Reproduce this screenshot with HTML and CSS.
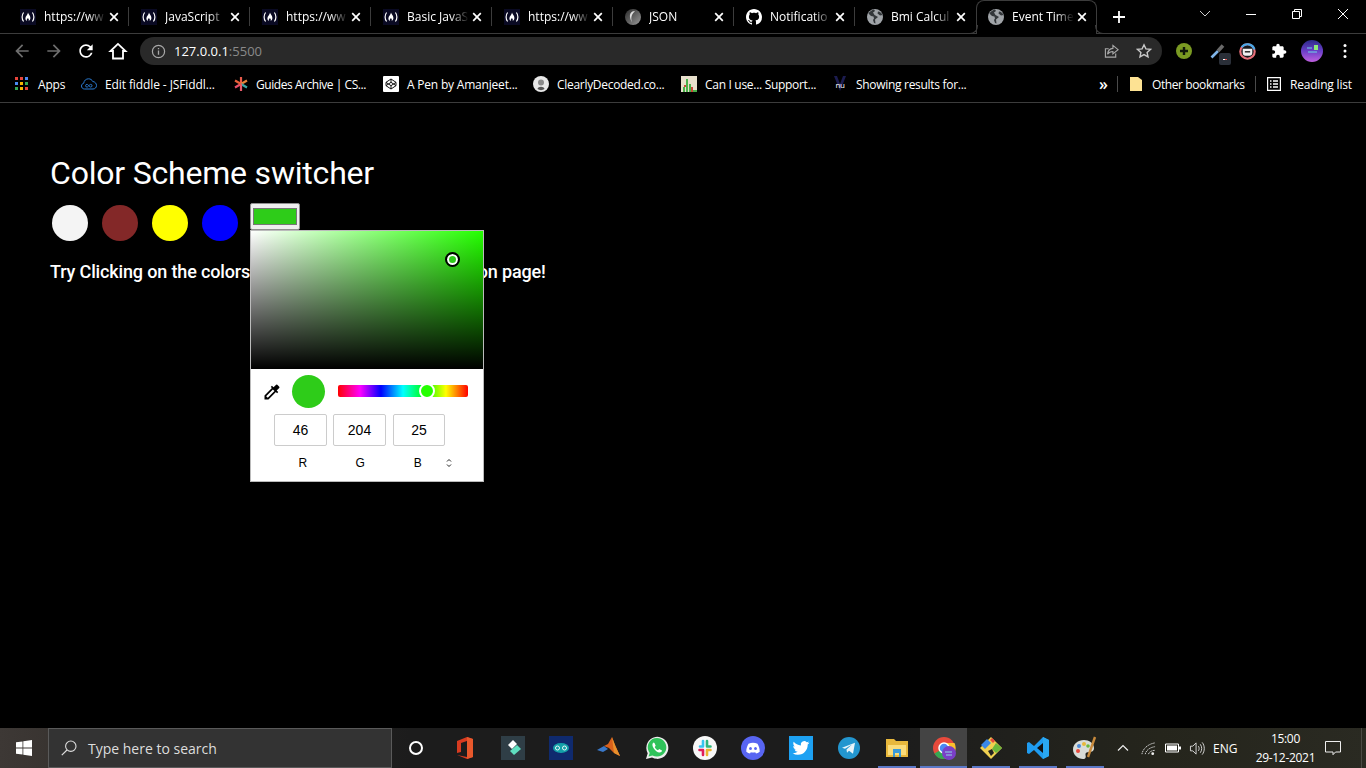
FILE: index.html
```html
<!DOCTYPE html>
<html lang="en">
    <head>
        <meta charset="UTF-8">
        <meta name="viewport" content="width=device-width, initial-scale=1.0">
        <title>Event Timer</title>
        <link rel="stylesheet" href="styles.css">
    </head>
    <body>
        <svg class="defs" width="0" height="0">
            <symbol id="fcc" viewBox="0 0 16 16">
                <rect width="16" height="16" fill="#0a0a23"/>
                <path d="M3.600 3.500C1.600 6 1.600 10 3.600 12.500M12.400 3.500c2 2.500 2 6.500 0 9" fill="none" stroke="#fff" stroke-width="1.200"/>
                <path d="M8 3.600c.4 1.600 2.400 3 2.400 5.400 0 1.600-.9 2.600-1.800 3 .5-1.200.2-2.200-.7-3-.7 1-1.500 1.600-.9 3-1.100-.5-1.600-1.500-1.600-2.800C5.400 7 7.900 6 8 3.600z" fill="#fff"/>
            </symbol>
            <symbol id="globe" viewBox="0 0 16 16">
                <circle cx="8" cy="8" r="8" fill="#a0a4a8"/>
                <path d="M7 .5C5 1 2.500 2.500 1.500 4.500L4 7l2.500.5.5 2-1 1.500 1 3 1.500.5-.5-4 3-2.500-3.500-2L6 3.500l2-1.500zM11 2.500l-.5 2 2.500 2 2.500-.5c-.5-1.500-2.500-3.500-4.500-3.500z" fill="#33373a"/>
            </symbol>
            <symbol id="close" viewBox="0 0 10 10">
                <path d="M1.200 1.200l7.600 7.600M8.800 1.200L1.200 8.800" fill="none" stroke="#fff" stroke-width="1.700"/>
            </symbol>
        </svg>

        <header class="tabstrip">
            <div class="tab">
                <svg class="favicon"><use href="#fcc"/></svg>
                <span class="tab-title">https://ww</span>
                <svg class="tab-close"><use href="#close"/></svg>
            </div>
            <div class="tab">
                <svg class="favicon"><use href="#fcc"/></svg>
                <span class="tab-title">JavaScript</span>
                <svg class="tab-close"><use href="#close"/></svg>
            </div>
            <div class="tab">
                <svg class="favicon"><use href="#fcc"/></svg>
                <span class="tab-title">https://ww</span>
                <svg class="tab-close"><use href="#close"/></svg>
            </div>
            <div class="tab">
                <svg class="favicon"><use href="#fcc"/></svg>
                <span class="tab-title">Basic JavaS</span>
                <svg class="tab-close"><use href="#close"/></svg>
            </div>
            <div class="tab">
                <svg class="favicon"><use href="#fcc"/></svg>
                <span class="tab-title">https://ww</span>
                <svg class="tab-close"><use href="#close"/></svg>
            </div>
            <div class="tab">
                <svg class="favicon" viewBox="0 0 16 16">
                    <defs>
                        <linearGradient id="json-fill" x1="0" y1="0" x2="1" y2="1">
                            <stop offset="0" stop-color="#2a2a2a"/>
                            <stop offset="1" stop-color="#9a9a9a"/>
                        </linearGradient>
                    </defs>
                    <circle cx="8" cy="8" r="8" fill="url(#json-fill)"/>
                    <path d="M10 2.500c-3-1-5.500 2-5 5.500.3 2.500 1.500 4.500 2 5.500-1-3-1-6 .5-8.500.7-1.200 1.600-2 2.500-2.500z" fill="#ddd"/>
                </svg>
                <span class="tab-title">JSON</span>
                <svg class="tab-close"><use href="#close"/></svg>
            </div>
            <div class="tab">
                <svg class="favicon" viewBox="0 0 16 16">
                    <path fill="#fff" d="M8 0C3.58 0 0 3.58 0 8c0 3.54 2.29 6.53 5.47 7.59.4.07.55-.17.55-.38 0-.19-.01-.82-.01-1.49-2.01.37-2.53-.49-2.69-.94-.09-.23-.48-.94-.82-1.13-.28-.15-.68-.52-.01-.53.63-.01 1.08.58 1.23.82.72 1.21 1.87.87 2.33.66.07-.52.28-.87.51-1.07-1.78-.2-3.64-.89-3.64-3.95 0-.87.31-1.59.82-2.15-.08-.2-.36-1.02.08-2.12 0 0 .67-.21 2.2.82.64-.18 1.32-.27 2-.27.68 0 1.36.09 2 .27 1.53-1.04 2.2-.82 2.2-.82.44 1.1.16 1.92.08 2.12.51.56.82 1.27.82 2.15 0 3.07-1.87 3.75-3.65 3.95.29.25.54.73.54 1.48 0 1.07-.01 1.93-.01 2.2 0 .21.15.46.55.38A8.013 8.013 0 0016 8c0-4.42-3.58-8-8-8z"/>
                </svg>
                <span class="tab-title">Notificatio</span>
                <svg class="tab-close"><use href="#close"/></svg>
            </div>
            <div class="tab tab-before-active">
                <svg class="favicon"><use href="#globe"/></svg>
                <span class="tab-title">Bmi Calcul</span>
                <svg class="tab-close"><use href="#close"/></svg>
            </div>
            <div class="tab tab-active">
                <svg class="favicon"><use href="#globe"/></svg>
                <span class="tab-title">Event Time</span>
                <svg class="tab-close"><use href="#close"/></svg>
            </div>
            <svg class="new-tab" viewBox="0 0 12 12"><path d="M6 0v12M0 6h12" stroke="#fff" stroke-width="1.800"/></svg>
            <div class="window-controls">
                <svg class="win-btn" viewBox="0 0 46 16"><path d="M18 5l5 5 5-5" fill="none" stroke="#ccc"/></svg>
                <svg class="win-btn" viewBox="0 0 46 16"><path d="M18 8.500h10" stroke="#fff"/></svg>
                <svg class="win-btn" viewBox="0 0 46 16"><path d="M18.500 5.500h7v7h-7zM20.500 5.500v-2h7v7h-2" fill="none" stroke="#fff"/></svg>
                <svg class="win-btn" viewBox="0 0 46 16"><path d="M18 3l10 10M28 3L18 13" stroke="#fff"/></svg>
            </div>
        </header>

        <nav class="toolbar">
            <svg class="nav-icon" viewBox="0 0 24 24"><path fill="#6e6e6e" d="M20 11H7.830l5.590-5.590L12 4l-8 8 8 8 1.410-1.410L7.830 13H20v-2z"/></svg>
            <svg class="nav-icon" viewBox="0 0 24 24"><path fill="#6e6e6e" d="M4 11h12.170l-5.590-5.590L12 4l8 8-8 8-1.410-1.410L16.170 13H4v-2z"/></svg>
            <svg class="nav-icon" viewBox="0 0 24 24"><path fill="#fff" d="M17.650 6.350A7.958 7.958 0 0012 4c-4.420 0-7.990 3.580-7.990 8s3.570 8 7.990 8c3.730 0 6.840-2.550 7.730-6h-2.080A5.990 5.990 0 0112 18c-3.310 0-6-2.690-6-6s2.690-6 6-6c1.660 0 3.140.690 4.220 1.780L13 11h7V4l-2.350 2.350z"/></svg>
            <svg class="nav-icon" viewBox="0 0 24 24"><path fill="none" stroke="#fff" stroke-width="2.200" d="M12 3.500L3 12h3v9h12v-9h3z"/></svg>
            <div class="omnibox">
                <svg class="omni-info" viewBox="0 0 16 16">
                    <circle cx="8" cy="8" r="6.500" fill="none" stroke="#a8a8a8" stroke-width="1.300"/>
                    <path d="M8 7v4.500M8 4.300v1.400" stroke="#a8a8a8" stroke-width="1.400"/>
                </svg>
                <span class="omni-url">127.0.0.1<span class="omni-port">:5500</span></span>
                <svg class="omni-share" viewBox="0 0 16 16"><path d="M9.500 1.500L15 6l-5.500 4.500V8C6.500 8 5 9 3.800 11c.3-3.500 2.200-6 5.700-6.300zM12.500 10v4h-11V5h3.500" fill="none" stroke="#a8a8a8" stroke-width="1.200"/></svg>
                <svg class="omni-star" viewBox="0 0 16 16"><path d="M8 1.800l1.900 4.100 4.500.5-3.300 3 .9 4.400L8 11.600l-4 2.200.9-4.400-3.300-3 4.500-.5z" fill="none" stroke="#c8c8c8" stroke-width="1.400"/></svg>
            </div>
            <div class="extensions">
                <svg class="ext-icon" viewBox="0 0 16 16">
                    <circle cx="8" cy="8" r="8" fill="#7a9a22"/>
                    <path d="M8 4v8M4 8h8" stroke="#10180a" stroke-width="2.400"/>
                </svg>
                <span class="ext-dropper">
                    <svg class="ext-icon" viewBox="0 0 16 16">
                        <path d="M1.500 14.500l6.500-6.500" stroke="#7fb4e8" stroke-width="2.600"/>
                        <path d="M8 8l5-5.500" stroke="#6a6a6a" stroke-width="3.600"/>
                    </svg>
                    <span class="ext-badge"><span class="ext-badge-dash"></span></span>
                </span>
                <svg class="ext-icon ext-ring" viewBox="0 0 16 16">
                    <circle cx="8" cy="8" r="6.800" fill="#16181c" stroke="#e8707a" stroke-width="2"/>
                    <path d="M2.500 4A6.800 6.800 0 0 1 14.500 6" fill="none" stroke="#4aa8e8" stroke-width="2"/>
                    <path d="M3.500 5.500h9v4c0 1.500-1 2.500-2.500 2.500H6c-1.500 0-2.500-1-2.500-2.500z" fill="#f0f0f0"/>
                    <path d="M5.500 7.500h5v1.500h-5z" fill="#333"/>
                </svg>
                <svg class="ext-icon ext-puzzle" viewBox="0 0 24 24"><path fill="#fff" d="M20.500 11H19V7c0-1.100-.9-2-2-2h-4V3.500C13 2.120 11.880 1 10.500 1S8 2.120 8 3.500V5H4c-1.100 0-1.990.9-1.990 2v3.800H3.500c1.490 0 2.700 1.210 2.700 2.700s-1.210 2.700-2.700 2.700H2V20c0 1.100.9 2 2 2h3.800v-1.500c0-1.490 1.210-2.700 2.700-2.700 1.490 0 2.700 1.210 2.700 2.700V22H17c1.100 0 2-.9 2-2v-4h1.500c1.380 0 2.500-1.120 2.500-2.500S21.880 11 20.500 11z"/></svg>
                <svg class="ext-avatar" viewBox="0 0 22 22">
                    <defs>
                        <linearGradient id="avatar-fill" x1="0" y1="0" x2="0" y2="1">
                            <stop offset="0" stop-color="#2c2a8a"/>
                            <stop offset="0.5" stop-color="#6a3fc8"/>
                            <stop offset="1" stop-color="#c060e0"/>
                        </linearGradient>
                    </defs>
                    <circle cx="11" cy="11" r="11" fill="url(#avatar-fill)"/>
                    <path d="M13 5h4v5h-4z" fill="#8fe87a"/>
                    <path d="M6 8h5M7 12h9" stroke="#6fd8e8" stroke-width="1.200"/>
                </svg>
                <svg class="ext-kebab" viewBox="0 0 4 16">
                    <circle cx="2" cy="2.500" r="1.500" fill="#fff"/>
                    <circle cx="2" cy="8" r="1.500" fill="#fff"/>
                    <circle cx="2" cy="13.500" r="1.500" fill="#fff"/>
                </svg>
            </div>
        </nav>

        <nav class="bookmarks">
            <a class="bookmark bm-apps">
                <svg class="bm-icon" viewBox="0 0 14 14">
                    <path d="M0 0h3v3H0z" fill="#e8453c"/><path d="M5 0h3v3H5z" fill="#e8453c"/><path d="M10 0h3v3h-3z" fill="#4a8af4"/>
                    <path d="M0 5h3v3H0z" fill="#4a8af4"/><path d="M5 5h3v3H5z" fill="#f4b400"/><path d="M10 5h3v3h-3z" fill="#34a853"/>
                    <path d="M0 10h3v3H0z" fill="#34a853"/><path d="M5 10h3v3H5z" fill="#f4b400"/><path d="M10 10h3v3h-3z" fill="#e8453c"/>
                </svg>
                Apps
            </a>
            <a class="bookmark bm-fiddle">
                <svg class="bm-icon" viewBox="0 0 16 16">
                    <path d="M3.500 13C1.500 13 .5 11.500.5 10c0-1.500 1-2.500 2.200-2.700C3 4.500 5 2.800 7.500 2.800c2 0 3.500 1 4.200 2.700 2.200.1 3.800 2 3.800 4 0 2-1.500 3.500-3.500 3.500z" fill="none" stroke="#2a7ad0" stroke-width="1"/>
                    <path d="M7.800 9.700c-.7-1-1.200-1.300-1.900-1.300a1.300 1.300 0 0 0 0 2.600c.7 0 1.200-.3 1.900-1.300s1.200-1.300 1.900-1.300a1.300 1.300 0 0 1 0 2.600c-.7 0-1.200-.3-1.900-1.300z" fill="none" stroke="#2a7ad0" stroke-width="1"/>
                </svg>
                Edit fiddle - JSFiddl...
            </a>
            <a class="bookmark bm-guides">
                <svg class="bm-icon" viewBox="0 0 16 16">
                    <path d="M8 8V1" stroke="#e85a4a" stroke-width="2.200"/>
                    <path d="M8 8l6-3.500" stroke="#e8843a" stroke-width="2.200"/>
                    <path d="M8 8l6 3.500" stroke="#3aa8a8" stroke-width="2.200"/>
                    <path d="M8 8v7" stroke="#e85a6a" stroke-width="2.200"/>
                    <path d="M8 8l-6 3.500" stroke="#e8506a" stroke-width="2.200"/>
                    <path d="M8 8L2 4.500" stroke="#e8603a" stroke-width="2.200"/>
                </svg>
                Guides Archive | CS...
            </a>
            <a class="bookmark bm-pen">
                <svg class="bm-icon" viewBox="0 0 16 16">
                    <rect width="16" height="16" rx="1" fill="#fff"/>
                    <path d="M8 3l5 3.300v3.400L8 13l-5-3.300V6.300zM8 3v3.300M8 9.700V13M3 6.300l5 3.400 5-3.400M3 9.700l5-3.400 5 3.400" fill="none" stroke="#111" stroke-width="1"/>
                </svg>
                A Pen by Amanjeet...
            </a>
            <a class="bookmark bm-clearly">
                <svg class="bm-icon" viewBox="0 0 16 16">
                    <circle cx="8" cy="8" r="8" fill="#e8e8e8"/>
                    <circle cx="8" cy="6.500" r="3" fill="#8a8a8a"/>
                    <path d="M4.500 13c.5-3 6.500-3 7 0-2 1.500-5 1.500-7 0z" fill="#555"/>
                </svg>
                ClearlyDecoded.co...
            </a>
            <a class="bookmark bm-caniuse">
                <svg class="bm-icon" viewBox="0 0 16 16">
                    <rect width="16" height="16" fill="#e8e0cc"/>
                    <path d="M2 11h2v5H2zM5 3h2v13H5zM8 8h2v8H8z" fill="#4ab04a"/>
                    <path d="M3 9h2v2H3zM10 11h2v5h-2z" fill="#c84a3a"/>
                    <path d="M12 14h4v2h-4z" fill="#4ab04a"/>
                </svg>
                Can I use... Support...
            </a>
            <a class="bookmark bm-nu">
                <svg class="bm-icon" viewBox="0 0 16 16">
                    <path d="M2 0l6 15 6-15h-3L8 8 5 0z" fill="#1c1c50"/>
                    <text class="bm-nu-text" x="8" y="12" text-anchor="middle">nu</text>
                </svg>
                Showing results for...
            </a>
            <span class="bm-more">»</span>
            <span class="bm-sep"></span>
            <a class="bookmark bm-other">
                <svg class="bm-folder" viewBox="0 0 12 14"><path d="M0 0h8l4 3v11H0z" fill="#fde293"/></svg>
                Other bookmarks
            </a>
            <span class="bm-sep"></span>
            <a class="bookmark bm-reading">
                <svg class="bm-icon" viewBox="0 0 14 14">
                    <path d="M.6.6h12.800v12.800H.6z" fill="none" stroke="#fff" stroke-width="1.200"/>
                    <path d="M3 4h1.500M6 4h5M3 7h1.500M6 7h5M3 10h1.500M6 10h5" stroke="#fff" stroke-width="1.300"/>
                </svg>
                Reading list
            </a>
        </nav>

        <main class="page">
            <h1 class="title">Color Scheme switcher</h1>
            <div class="swatches">
                <button class="swatch swatch-white"></button>
                <button class="swatch swatch-brown"></button>
                <button class="swatch swatch-yellow"></button>
                <button class="swatch swatch-blue"></button>
                <div class="picker-wrap">
                    <div class="color-well"><span class="color-well-fill"></span></div>
                    <div class="picker">
                        <div class="picker-area">
                            <span class="picker-handle"></span>
                        </div>
                        <div class="picker-controls">
                            <svg class="picker-dropper" viewBox="0 0 24 24"><path fill="#000" d="M20.710 5.630l-2.340-2.340a.996.996 0 00-1.410 0l-3.120 3.120-1.930-1.910-1.410 1.410 1.420 1.420L3 16.250V21h4.750l8.920-8.920 1.420 1.420 1.410-1.410-1.920-1.920 3.120-3.120c.4-.4.4-1.030.01-1.420zM6.920 19L5 17.080l8.060-8.060 1.920 1.920L6.920 19z"/></svg>
                            <span class="picker-preview"></span>
                            <div class="hue-bar"><span class="hue-thumb"></span></div>
                        </div>
                        <div class="picker-inputs">
                            <span class="picker-field">46</span>
                            <span class="picker-field">204</span>
                            <span class="picker-field picker-field-last">25</span>
                        </div>
                        <div class="picker-labels">
                            <span class="picker-label">R</span>
                            <span class="picker-label">G</span>
                            <span class="picker-label">B</span>
                            <svg class="picker-toggle" viewBox="0 0 6 10"><path d="M1 3.500L3 1.500l2 2M1 6.500l2 2 2-2" fill="none" stroke="#222" stroke-width="1"/></svg>
                        </div>
                    </div>
                </div>
            </div>
            <p class="hint">Try Clicking on the colors to change the color scheme on page!</p>
        </main>

        <footer class="taskbar">
            <div class="start">
                <svg class="start-logo" viewBox="0 0 16 16"><path fill="#fff" d="M0 2.300l6.500-.9v6.200H0zM7.300 1.300L16 0v7.600H7.300zM0 8.400h6.500v6.200L0 13.700zM7.300 8.400H16V16l-8.700-1.200z"/></svg>
            </div>
            <div class="search">
                <svg class="search-icon" viewBox="0 0 16 16"><circle cx="9.800" cy="6.200" r="5.200" fill="none" stroke="#ddd" stroke-width="1.100"/><path d="M6 10L.8 15.200" stroke="#ddd" stroke-width="1.200"/></svg>
                <span class="search-text">Type here to search</span>
            </div>
            <div class="apps">
                <span class="app"><svg class="cortana" viewBox="0 0 16 16"><circle cx="8" cy="8" r="6" fill="none" stroke="#fff" stroke-width="2"/></svg></span>
                <span class="app"><svg class="app-icon" viewBox="0 0 24 24">
                    <path d="M4 5l10-4 6 2v18l-6 2-10-4 10 2V5L8 7v9l-4 1z" fill="#d83b20"/>
                    <path d="M14 1l6 2v18l-6 2z" fill="#e8582c"/>
                </svg></span>
                <span class="app"><svg class="app-icon" viewBox="0 0 24 24">
                    <rect width="24" height="24" fill="#2f3e46"/>
                    <path d="M7 9l5-5 4 4-5 5z" fill="#fff"/>
                    <path d="M9 15l7-6 4 4-7 6z" fill="#5fe0c0"/>
                </svg></span>
                <span class="app"><svg class="app-icon" viewBox="0 0 24 24">
                    <rect width="24" height="24" fill="#0f2a6e"/>
                    <ellipse cx="12" cy="12" rx="8" ry="5" fill="#13a0a8"/>
                    <path d="M6.500 12a2 2 0 0 1 4 0 2 2 0 0 1-4 0zM13.500 12a2 2 0 0 1 4 0 2 2 0 0 1-4 0z" fill="none" stroke="#e8f8f8" stroke-width="1"/>
                </svg></span>
                <span class="app"><svg class="app-icon" viewBox="0 0 24 24">
                    <path d="M0 14l7-4 4 3-5 3z" fill="#3a78c8"/>
                    <path d="M7 10l4-2 4-7 3 8 5 11-6-3-5-5z" fill="#d8601c"/>
                    <path d="M15 1l3 8 5 11-6-3z" fill="#e8902c"/>
                </svg></span>
                <span class="app"><svg class="app-icon" viewBox="0 0 24 24">
                    <path d="M1 23l1.700-5.800A11 11 0 1 1 7 21.500z" fill="#eee"/>
                    <path d="M3.500 20.500l1.200-3.500A9.300 9.300 0 1 1 7.500 19.400z" fill="#2fc35a"/>
                    <path d="M8.500 6.500c-1.500 1-1.500 3 0 5.500s4 4.500 6 4.500c1.500 0 2.500-1 2.500-2l-2.800-1.500-1.200 1.200c-1.500-.6-2.700-1.800-3.300-3.200l1-1.200-1.200-2.800z" fill="#fff"/>
                </svg></span>
                <span class="app"><svg class="app-icon" viewBox="0 0 24 24">
                    <circle cx="12" cy="12" r="12" fill="#f8f8f8"/>
                    <path d="M10 5v5M7 10.500h3" stroke="#36c5f0" stroke-width="2.600" stroke-linecap="round"/>
                    <path d="M14 5v5M14 10.500h3.500" stroke="#2eb67d" stroke-width="2.600" stroke-linecap="round"/>
                    <path d="M14 19v-5M14 14h3.500" stroke="#ecb22e" stroke-width="2.600" stroke-linecap="round"/>
                    <path d="M10 19v-5M6.500 14H10" stroke="#e01e5a" stroke-width="2.600" stroke-linecap="round"/>
                </svg></span>
                <span class="app"><svg class="app-icon" viewBox="0 0 24 24">
                    <circle cx="12" cy="12" r="12" fill="#5865f2"/>
                    <path d="M7.500 7.700c3-1.300 6-1.300 9 0 1.500 2.500 2.300 5.300 2.200 8-1.300 1-2.500 1.500-3.700 1.800l-.8-1.300c-1.400.4-2.900.4-4.400 0l-.8 1.300c-1.200-.3-2.400-.8-3.700-1.800-.1-2.700.7-5.500 2.200-8z" fill="#fff"/>
                    <ellipse cx="9.500" cy="12.500" rx="1.400" ry="1.600" fill="#5865f2"/>
                    <ellipse cx="14.500" cy="12.500" rx="1.400" ry="1.600" fill="#5865f2"/>
                </svg></span>
                <span class="app"><svg class="app-icon" viewBox="0 0 24 24">
                    <rect width="24" height="24" fill="#1da1f2"/>
                    <path transform="translate(3.600 3.600) scale(.7)" fill="#fff" d="M23.953 4.570a10 10 0 01-2.825.775 4.958 4.958 0 002.163-2.723c-.951.555-2.005.959-3.127 1.184a4.920 4.920 0 00-8.384 4.482C7.690 8.095 4.067 6.130 1.640 3.162a4.822 4.822 0 00-.666 2.475c0 1.710.870 3.213 2.188 4.096a4.904 4.904 0 01-2.228-.616v.060a4.923 4.923 0 003.946 4.827 4.996 4.996 0 01-2.212.085 4.936 4.936 0 004.604 3.417 9.867 9.867 0 01-6.102 2.105c-.390 0-.779-.023-1.170-.067a13.995 13.995 0 007.557 2.209c9.053 0 13.998-7.496 13.998-13.985 0-.210 0-.420-.015-.630A9.935 9.935 0 0024 4.590z"/>
                </svg></span>
                <span class="app"><svg class="app-icon" viewBox="0 0 24 24">
                    <circle cx="12" cy="12" r="11" fill="#2396cf"/>
                    <path d="M5 11.800l13-5-2 11-4-3-2 2-.5-3.300 5.500-5-7 4.200z" fill="#e8f4fa"/>
                </svg></span>
                <span class="app app-open"><svg class="app-icon" viewBox="0 0 24 24">
                    <path d="M1 3h8l2 2h12v16H1z" fill="#e8b83c"/>
                    <path d="M3 9h18v10H3z" fill="#fbdc7a"/>
                    <path d="M8 13h8v8h-2v-4h-4v4H8z" fill="#3a9ad8"/>
                </svg></span>
                <span class="app app-open app-active"><svg class="app-icon" viewBox="0 0 24 24">
                    <circle cx="12" cy="12" r="11" fill="#e84a3c"/>
                    <path d="M12 12L2.500 17.500A11 11 0 0 0 13 23z" fill="#34a853"/>
                    <path d="M12 7h10.500A11 11 0 0 1 13 23z" fill="#fbc02d"/>
                    <circle cx="12" cy="12" r="5" fill="#4a8af4" stroke="#fff" stroke-width="1.500"/>
                    <circle cx="17" cy="17" r="7" fill="#7a3fc8"/>
                    <path d="M13 16h7M14 19h6" stroke="#8fd8e8"/>
                </svg></span>
                <span class="app app-open"><svg class="app-icon" viewBox="0 0 24 24">
                    <path d="M12 1l11 11-11 11L1 12z" fill="#f0d050"/>
                    <path d="M8 3L2 9l4 4 6-6z" fill="#3a88e8"/>
                    <path d="M13 2l-2 2 3 3 2-2z" fill="#e8483c"/>
                    <path d="M17 7l6 5-6 5-4-4z" fill="#6ab83c"/>
                    <path d="M9 15l3 5 3-3-2-4z" fill="#222"/>
                </svg></span>
                <span class="app app-open"><svg class="app-icon" viewBox="0 0 24 24">
                    <path d="M17 1l6 3v16l-6 3-9-9-5 4-2-1V7l2-1 5 4z" fill="#1f9cf0"/>
                    <path d="M17 7l-6 5 6 5z" fill="#111"/>
                    <path d="M17 1l6 3v16l-6 3z" fill="#2aa8f2"/>
                </svg></span>
                <span class="app app-open"><svg class="app-icon" viewBox="0 0 24 24">
                    <path d="M11 4C5 4 0 8 0 13.500S5 23 10 23c3 0 3-2 2.500-4s1-3 3.500-3c3 0 5-1 5-4 0-5-5-8-10-8z" fill="#d8dcd8"/>
                    <circle cx="6" cy="10" r="2" fill="#4a8ad8"/>
                    <circle cx="11" cy="8" r="2" fill="#e8b83c"/>
                    <circle cx="5" cy="15" r="2" fill="#e8483c"/>
                    <circle cx="15" cy="10" r="1.800" fill="#6ab83c"/>
                    <path d="M22 1l-7 20" stroke="#c88a3c" stroke-width="2.400"/>
                </svg></span>
            </div>
            <div class="tray">
                <svg class="tray-chevron" viewBox="0 0 12 8"><path d="M1 6.500l5-5 5 5" fill="none" stroke="#eee" stroke-width="1.200"/></svg>
                <svg class="tray-wifi" viewBox="0 0 16 16">
                    <path d="M1 14C2 8 8 3 15 2M4.500 14C5.500 10 9 7 15 6M8 14c.5-2 3-4 7-4" fill="none" stroke="#ddd" stroke-dasharray="1.500 .7"/>
                    <circle cx="12.500" cy="13.500" r="1.500" fill="#eee"/>
                </svg>
                <svg class="tray-battery" viewBox="0 0 16 10">
                    <path d="M.5 1h13v8H.5z" fill="none" stroke="#fff"/>
                    <path d="M2 2.500h10v5H2z" fill="#fff"/>
                    <path d="M14 3.500h2v3h-2z" fill="#fff"/>
                </svg>
                <svg class="tray-volume" viewBox="0 0 16 16">
                    <path d="M1 5.500h2.500L7 2v12l-3.500-3.500H1z" fill="none" stroke="#ddd"/>
                    <path d="M9.500 5.500c1 1.500 1 3.500 0 5M11.500 3.500c2 2.500 2 6.500 0 9M13.500 1.500c3 3.500 3 9.500 0 13" fill="none" stroke="#ddd"/>
                </svg>
                <span class="tray-lang">ENG</span>
                <div class="clock">
                    <span>15:00</span>
                    <span>29-12-2021</span>
                </div>
                <svg class="tray-notify" viewBox="0 0 16 16"><path d="M.5 1.500h15v10.500h-5L8 14.700 8 12H.5z" fill="none" stroke="#eee"/></svg>
                <span class="show-desktop"></span>
            </div>
        </footer>
    </body>
</html>
```
FILE: styles.css
```css
* {
    box-sizing: border-box;
}
body {
    background: #000;
    color: #fff;
    display: flex;
    flex-direction: column;
    font-family: "Open Sans", sans-serif;
    height: 768px;
    margin: 0;
    overflow: hidden;
    width: 1366px;
}
.defs {
    display: block;
    height: 0;
    position: absolute;
}

/* tab strip */
.tabstrip {
    align-items: stretch;
    border-bottom: 1px solid #3c3c3c;
    display: flex;
    flex: none;
    height: 34px;
    padding-left: 8px;
}
.tab {
    align-items: center;
    display: flex;
    flex: none;
    padding-left: 12px;
    position: relative;
    width: 121px;
}
.tab::after {
    background: #3c3c3c;
    bottom: 7px;
    content: "";
    position: absolute;
    right: 0;
    top: 7px;
    width: 1px;
}
.tab-before-active::after {
    display: none;
}
.tab-active {
    background: #000;
    border: 1px solid #3c3c3c;
    border-bottom: 0;
    border-radius: 8px 8px 0 0;
    height: 34px;
    padding-bottom: 2px;
    padding-left: 11px;
}
.tab-active::before {
    border-bottom: 1px solid #3c3c3c;
    border-bottom-right-radius: 8px;
    border-right: 1px solid #3c3c3c;
    bottom: 0;
    content: "";
    height: 8px;
    left: -9px;
    position: absolute;
    width: 9px;
}
.tab-active::after {
    background: none;
    border-bottom: 1px solid #3c3c3c;
    border-bottom-left-radius: 8px;
    border-left: 1px solid #3c3c3c;
    bottom: 0;
    height: 8px;
    right: -9px;
    top: auto;
    width: 9px;
}
.favicon {
    flex: none;
    height: 16px;
    width: 16px;
}
.tab-title {
    flex: none;
    font-size: 12px;
    margin-left: 8px;
    -webkit-mask-image: linear-gradient(90deg, #000 70%, transparent);
    mask-image: linear-gradient(90deg, #000 70%, transparent);
    overflow: hidden;
    white-space: nowrap;
    width: 62px;
}
.tab-close {
    flex: none;
    height: 10px;
    margin-left: 3px;
    width: 10px;
}
.new-tab {
    align-self: center;
    flex: none;
    height: 12px;
    margin-left: 16px;
    width: 12px;
}
.window-controls {
    display: flex;
    margin-left: auto;
    padding-top: 6px;
}
.win-btn {
    height: 16px;
    width: 46px;
}

/* toolbar */
.toolbar {
    align-items: center;
    display: flex;
    flex: none;
    gap: 12px;
    height: 34px;
    padding-left: 12px;
}
.nav-icon {
    flex: none;
    height: 20px;
    width: 20px;
}
.omnibox {
    align-items: center;
    background: #292929;
    border-radius: 14px;
    display: flex;
    flex: none;
    height: 28px;
    padding: 0 8px 0 11px;
    width: 1022px;
}
.omni-info {
    height: 15px;
    width: 15px;
}
.omni-url {
    font-size: 13px;
    margin-left: 8px;
}
.omni-port {
    color: #8a8a8a;
}
.omni-share {
    height: 15px;
    margin-left: auto;
    width: 15px;
}
.omni-star {
    height: 16px;
    margin-left: 17px;
    margin-right: 2px;
    width: 16px;
}
.extensions {
    align-items: center;
    display: flex;
    flex: none;
    gap: 14px;
    margin-left: 2px;
}
.ext-icon {
    display: block;
    height: 16px;
    width: 16px;
}
.ext-dropper {
    display: block;
    margin-left: 4px;
    position: relative;
}
.ext-badge {
    align-items: center;
    background: #2a2f38;
    border-radius: 2px;
    bottom: -6px;
    display: flex;
    height: 12px;
    justify-content: center;
    position: absolute;
    right: -5px;
    width: 12px;
}
.ext-badge-dash {
    background: linear-gradient(90deg, #fff 50%, #e05050 50%);
    height: 1px;
    width: 4px;
}
.ext-ring {
    height: 17px;
    margin-left: -1px;
    width: 17px;
}
.ext-puzzle {
    margin-left: 1px;
}
.ext-avatar {
    height: 22px;
    width: 22px;
}
.ext-kebab {
    height: 16px;
    margin-left: 6px;
    width: 4px;
}

/* bookmarks */
.bookmarks {
    align-items: center;
    border-bottom: 1px solid #3c3c3c;
    display: flex;
    flex: none;
    font-size: 12px;
    height: 35px;
    letter-spacing: -0.2px;
    padding-bottom: 2px;
    padding-left: 15px;
}
.bookmark {
    align-items: center;
    display: flex;
    flex: none;
    gap: 8px;
    white-space: nowrap;
}
.bm-icon {
    flex: none;
    height: 16px;
    width: 16px;
}
.bm-nu-text {
    fill: #fff;
    font-family: "Open Sans", sans-serif;
    font-size: 8px;
}
.bm-apps .bm-icon {
    height: 14px;
    width: 14px;
}
.bm-apps {
    gap: 9px;
    width: 66px;
}
.bm-fiddle {
    letter-spacing: -0.1px;
    width: 152px;
}
.bm-guides {
    gap: 7px;
    letter-spacing: -0.45px;
    width: 150px;
}
.bm-pen {
    width: 150px;
}
.bm-clearly {
    letter-spacing: -0.3px;
    width: 148px;
}
.bm-caniuse {
    letter-spacing: -0.3px;
    width: 151px;
}
.bm-nu {
    letter-spacing: -0.3px;
    width: 267px;
}
.bm-more {
    font-size: 16px;
    font-weight: 600;
    line-height: 16px;
    width: 18px;
}
.bm-sep {
    background: #4a4a4a;
    flex: none;
    height: 16px;
    width: 1px;
}
.bm-other {
    gap: 10px;
    letter-spacing: -0.4px;
    margin-left: 12px;
    width: 125px;
}
.bm-folder {
    flex: none;
    height: 14px;
    width: 12px;
}
.bm-reading {
    gap: 9px;
    margin-left: 11px;
}
.bm-reading .bm-icon {
    height: 14px;
    width: 14px;
}

/* page */
.page {
    flex: 1;
    font-family: Roboto, sans-serif;
    padding: 50px 50px 0;
}
.title {
    font-size: 32px;
    font-weight: 400;
    letter-spacing: -0.2px;
    line-height: 40px;
    margin: 0;
}
.swatches {
    align-items: flex-start;
    display: flex;
    gap: 12px;
    margin-top: 10px;
}
.swatch {
    border: 0;
    border-radius: 50%;
    height: 36px;
    margin: 2px 0 0 2px;
    padding: 0;
    width: 36px;
}
.swatch-white {
    background: #f4f4f4;
}
.swatch-brown {
    background: #832828;
}
.swatch-yellow {
    background: #ff0;
}
.swatch-blue {
    background: #00f;
}
.picker-wrap {
    position: relative;
}
.color-well {
    background: #efefef;
    border: 1px solid #8f8f8f;
    border-radius: 2px;
    height: 27px;
    padding: 4px 2px;
    width: 50px;
}
.color-well-fill {
    background: #2ecc19;
    border: 1px solid #777;
    display: block;
    height: 100%;
}
.hint {
    font-size: 18px;
    font-weight: 500;
    letter-spacing: -0.15px;
    line-height: 24px;
    margin: 19px 0 0;
}

/* color picker popup */
.picker {
    background: #fff;
    border: 1px solid #bbb;
    color: #000;
    font-family: "Liberation Sans", Arial, sans-serif;
    height: 252px;
    left: 0;
    position: absolute;
    top: 27px;
    width: 234px;
    z-index: 2;
}
.picker-area {
    background: linear-gradient(transparent, #000), linear-gradient(90deg, #fff, #24ff00);
    height: 138px;
    position: relative;
}
.picker-handle {
    background: #2ecc19;
    border: 2px solid #000;
    border-radius: 50%;
    box-shadow: inset 0 0 0 2px #fff;
    height: 15px;
    left: 194px;
    position: absolute;
    top: 21px;
    width: 15px;
}
.picker-controls {
    align-items: center;
    display: flex;
    height: 33px;
    margin-top: 6px;
    padding-left: 11px;
}
.picker-dropper {
    flex: none;
    height: 20px;
    width: 20px;
}
.picker-preview {
    background: #2ecc19;
    border-radius: 50%;
    flex: none;
    height: 33px;
    margin-left: 10px;
    width: 33px;
}
.hue-bar {
    background: linear-gradient(90deg, #f00, #f0f 17%, #00f 33%, #0ff 50%, #0f0 67%, #ff0 83%, #f00);
    border-radius: 2px;
    flex: none;
    height: 12px;
    margin-bottom: 2px;
    margin-left: 13px;
    position: relative;
    width: 130px;
}
.hue-thumb {
    background: #24ff00;
    border: 2px solid #fff;
    border-radius: 50%;
    height: 16px;
    left: 81px;
    position: absolute;
    top: -2px;
    width: 16px;
}
.picker-inputs {
    display: flex;
    gap: 6px;
    margin-top: 6px;
    padding-left: 23px;
}
.picker-field {
    align-items: center;
    border: 1px solid #ccc;
    border-radius: 2px;
    display: flex;
    font-size: 14px;
    height: 32px;
    justify-content: center;
    width: 53px;
}
.picker-field-last {
    margin-left: 1px;
    width: 52px;
}
.picker-labels {
    align-items: center;
    display: flex;
    font-size: 12px;
    height: 14px;
    margin-top: 10px;
    padding-left: 23px;
}
.picker-label {
    text-align: center;
    width: 57.5px;
}
.picker-toggle {
    height: 10px;
    margin-left: -1px;
    width: 6px;
}

/* taskbar */
.taskbar {
    align-items: stretch;
    background: linear-gradient(90deg, #3d3835 0, #2c2825 14%, #1c1c1c 30%, #1c1c1c 65%, #25251c 85%, #2a2a22 100%);
    display: flex;
    flex: none;
    height: 40px;
}
.start {
    align-items: center;
    display: flex;
    flex: none;
    justify-content: center;
    width: 48px;
}
.start-logo {
    height: 16px;
    width: 16px;
}
.search {
    align-items: center;
    background: #333;
    border: 1px solid #5a5a5a;
    display: flex;
    flex: none;
    width: 344px;
}
.search-icon {
    height: 16px;
    margin-left: 12px;
    width: 16px;
}
.search-text {
    color: #ddd;
    font-size: 14px;
    margin-left: 11px;
}
.apps {
    display: flex;
    flex: none;
}
.app {
    align-items: center;
    display: flex;
    flex: none;
    justify-content: center;
    width: 48px;
}
.app:nth-child(2) {
    margin-left: 1px;
}
.app:nth-child(n+11) {
    width: 47px;
}
.cortana {
    height: 16px;
    width: 16px;
}
.app-icon {
    height: 24px;
    width: 24px;
}
.app-open {
    background: linear-gradient(#5b78c7, #5b78c7) bottom center / 38px 2px no-repeat;
}
.app-active {
    background: linear-gradient(#5b78c7, #5b78c7) bottom center / 100% 2px no-repeat, #444;
}
.tray {
    align-items: center;
    display: flex;
    flex: 1;
    font-size: 12px;
    padding-left: 7px;
}
.tray-chevron {
    height: 8px;
    margin-left: 2px;
    width: 12px;
}
.tray-wifi {
    height: 15px;
    margin-left: 12px;
    width: 15px;
}
.tray-battery {
    height: 10px;
    margin-left: 9px;
    width: 16px;
}
.tray-volume {
    height: 15px;
    margin-left: 8px;
    width: 16px;
}
.tray-lang {
    margin-left: 8px;
}
.clock {
    align-items: center;
    display: flex;
    flex-direction: column;
    letter-spacing: -0.3px;
    line-height: 19px;
    margin-left: 13px;
    width: 70px;
}
.tray-notify {
    height: 16px;
    margin-left: 5px;
    width: 16px;
}
.show-desktop {
    background: #4a4a44;
    height: 40px;
    margin-left: 20px;
    width: 1px;
}
```
